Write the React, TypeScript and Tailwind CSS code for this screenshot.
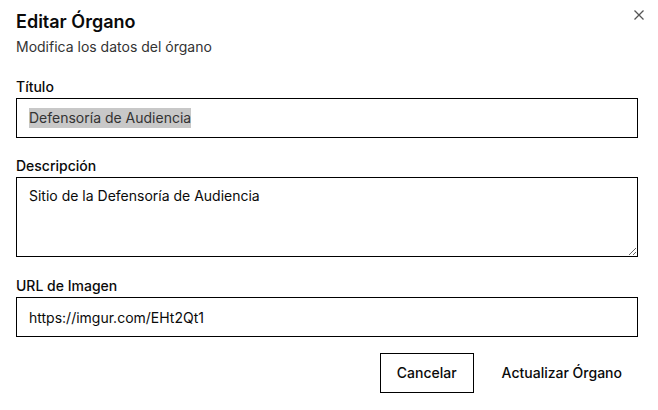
export default function App() {
  return (
    <div
      className="relative w-[658px] h-[410px] bg-white text-[#0a0a0a]"
      style={{ fontFamily: "Inter, 'Noto Sans', sans-serif" }}
    >
      <button className="absolute right-[9px] top-[5px] p-1 text-[#555]">
        <svg width="12" height="12" viewBox="0 0 12 12" fill="none" stroke="currentColor" strokeWidth="1.3">
          <path d="M1.5 1.5l9 9M10.5 1.5l-9 9" />
        </svg>
      </button>
      <div className="flex flex-col pl-4 pr-5 pt-[8px]">
        <h2 className="text-lg leading-7 font-semibold mb-px">Editar Órgano</h2>
        <p className="text-sm leading-5 text-[#333]">Modifica los datos del órgano</p>

        <div className="flex flex-col gap-[18px] mt-[20px]">
          <div className="flex flex-col gap-px">
            <label className="text-sm leading-5 font-medium">Título</label>
            <div className="h-10 border border-black px-3 flex items-center text-sm">
              <span className="bg-[#c8c8c8] text-[#333]">Defensoría de Audiencia</span>
            </div>
          </div>
          <div className="flex flex-col gap-px">
            <label className="text-sm leading-5 font-medium">Descripción</label>
            <textarea
              className="h-20 border border-black px-3 py-2 text-sm leading-5 outline-none"
              defaultValue="Sitio de la Defensoría de Audiencia"
            />
          </div>
          <div className="flex flex-col gap-px mt-px">
            <label className="text-sm leading-5 font-medium">URL de Imagen</label>
            <input
              className="h-10 border border-black px-3 text-sm outline-none"
              defaultValue="https://imgur.com/EHt2Qt1"
            />
          </div>
        </div>

        <div className="flex justify-end gap-3 mt-4">
          <button className="h-10 px-4 border border-black text-sm font-medium">Cancelar</button>
          <button className="h-10 px-4 text-sm font-medium">Actualizar Órgano</button>
        </div>
      </div>
    </div>
  );
}
